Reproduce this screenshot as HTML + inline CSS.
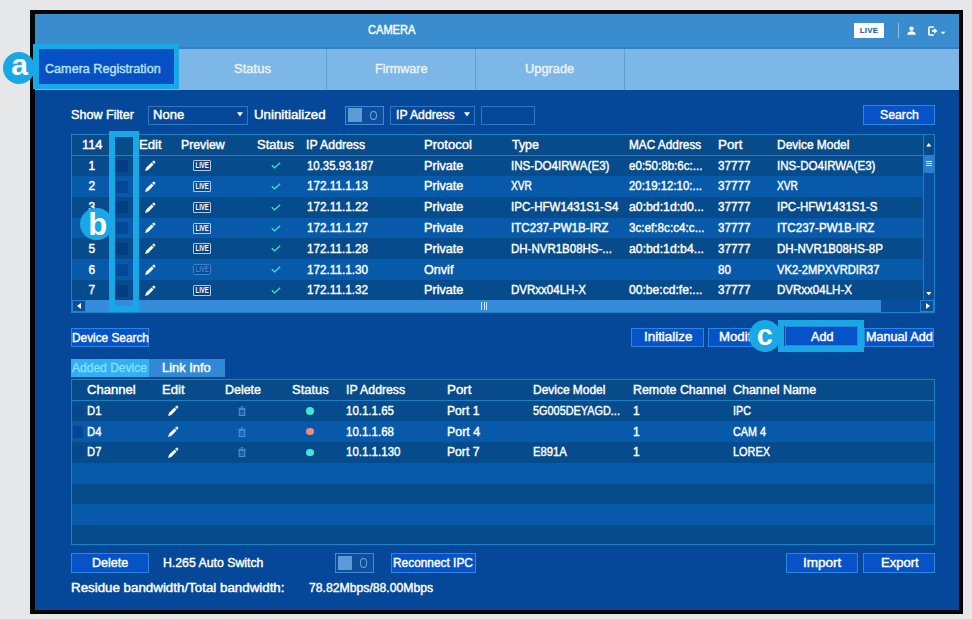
<!DOCTYPE html>
<html>
<head>
<meta charset="utf-8">
<title>CAMERA</title>
<style>
html,body{margin:0;padding:0;}
body{width:972px;height:619px;background:#e6e7e8;position:relative;overflow:hidden;
 font-family:"Liberation Sans",sans-serif;font-size:12px;color:#fff;-webkit-text-stroke:0.4px currentColor;}
div,span,svg{position:absolute;box-sizing:border-box;}
.t{white-space:nowrap;line-height:16px;height:16px;font-size:12px;transform-origin:0 50%;}
.btn{border:1px solid #2b86de;background:#0653c9;}
.hl{border:6px solid #1aa7e5;}
.circ{width:31px;height:31px;border-radius:16px;background:#1aa7e5;color:#fff;text-align:center;font-weight:bold;font-size:28px;line-height:28px;-webkit-text-stroke:0;}
</style>
</head>
<body>
<div style="left:30px;top:10px;width:933px;height:604px;background:#050505;"></div>
<div style="left:35px;top:14px;width:924px;height:596px;background:#05489a;"></div>
<div style="left:35px;top:14px;width:924px;height:34px;background:#398dcf;"></div>
<div style="left:35px;top:46.5px;width:924px;height:2.5px;background:#3181c5;"></div>
<div style="left:35px;top:49px;width:924px;height:41px;background:#7cb7e7;"></div>
<span class="t" style="left:367.5px;top:22px;transform:scaleX(0.923);">CAMERA</span>
<div style="left:854px;top:23px;width:30px;height:15px;background:#fff;color:#1a4fa8;font-size:8px;line-height:15px;text-align:center;font-weight:bold;letter-spacing:0.2px;-webkit-text-stroke:0;">LIVE</div>
<div style="left:898px;top:23px;width:1.2px;height:15px;background:rgba(255,255,255,0.45);"></div>
<svg style="left:907px;top:26px" width="9" height="9" viewBox="0 0 11 11"><circle cx="5.5" cy="3.2" r="2.7" fill="#fff"/><path d="M0.3 10.8 C0.3 7.5 3 6.4 5.5 6.4 C8 6.4 10.7 7.5 10.7 10.8 Z" fill="#fff"/></svg>
<svg style="left:927.5px;top:26px" width="18" height="9.9" viewBox="0 0 20 11"><path d="M6.5 1 H2.2 Q1 1 1 2.2 V8.8 Q1 10 2.2 10 H6.5" fill="none" stroke="#fff" stroke-width="1.7"/><path d="M4.5 4.3 H7 V2.3 L10.5 5.5 L7 8.7 V6.7 H4.5 Z" fill="#fff"/><path d="M14 6.4 H19.4 L16.7 9.1 Z" fill="#fff"/></svg>
<div style="left:325.5px;top:49px;width:1px;height:41px;background:#5f9fd8;"></div>
<div style="left:474.5px;top:49px;width:1px;height:41px;background:#5f9fd8;"></div>
<div style="left:623.5px;top:49px;width:1px;height:41px;background:#5f9fd8;"></div>
<div style="left:37px;top:48px;width:140px;height:38px;background:#0650c3;"></div>
<span class="t" style="left:45.2px;top:61px;transform:scaleX(1.051);color:#b5e0ff;">Camera Registration</span>
<span class="t" style="left:234px;top:61px;transform:scaleX(1.085);color:#e9f3fc;">Status</span>
<span class="t" style="left:375px;top:61px;transform:scaleX(1.048);color:#e9f3fc;">Firmware</span>
<span class="t" style="left:525px;top:61px;transform:scaleX(1.068);color:#e9f3fc;">Upgrade</span>
<span class="t" style="left:71px;top:107px;transform:scaleX(1.048);">Show Filter</span>
<div style="left:148px;top:105.5px;width:100px;height:19.5px;background:#07479a;border:1px solid #2c78c2;"></div>
<span class="t" style="left:153px;top:107px;transform:scaleX(1.086);">None</span>
<svg style="left:236.5px;top:112px" width="6" height="5" viewBox="0 0 6 5"><path d="M0 0.3 H6 L3 4.6 Z" fill="#fff"/></svg>
<span class="t" style="left:253.75px;top:107px;transform:scaleX(1.107);">Uninitialized</span>
<div style="left:345px;top:105.5px;width:38.5px;height:19.5px;background:#0d4f9c;border:1px solid #4388d0;"></div>
<div style="left:348px;top:108.25px;width:13.5px;height:14px;background:#5c9bd8;"></div>
<div style="left:369.5px;top:110.5px;width:7.5px;height:9.5px;border-radius:50%;border:1.3px solid #6aa6e0;"></div>
<div style="left:390px;top:105.5px;width:85px;height:19.5px;background:#07479a;border:1px solid #2c78c2;"></div>
<span class="t" style="left:395.5px;top:107px;transform:scaleX(1.015);">IP Address</span>
<svg style="left:463.7px;top:112px" width="6" height="5" viewBox="0 0 6 5"><path d="M0 0.3 H6 L3 4.6 Z" fill="#fff"/></svg>
<div style="left:480.75px;top:105.5px;width:54.5px;height:19.5px;background:#07479a;border:1px solid #2c78c2;"></div>
<div class="btn" style="left:863px;top:105px;width:72px;height:19.5px;"></div>
<span class="t" style="left:879.75px;top:107px;transform:scaleX(1.023);">Search</span>
<div style="left:70.5px;top:134px;width:864px;height:178.5px;background:#064b8c;border:1px solid #1a82c2;"></div>
<div style="left:71.5px;top:135px;width:862px;height:20px;background:#084b8a;"></div>
<div style="left:71.5px;top:155px;width:851.25px;height:1px;background:#1a82c2;"></div>
<span class="t" style="left:82px;top:137px;transform:scaleX(1.067);">114</span>
<span class="t" style="left:139px;top:137px;transform:scaleX(1.096);">Edit</span>
<span class="t" style="left:180.75px;top:137px;transform:scaleX(1.023);">Preview</span>
<span class="t" style="left:257px;top:137px;transform:scaleX(1.078);">Status</span>
<span class="t" style="left:306.25px;top:137px;transform:scaleX(1.023);">IP Address</span>
<span class="t" style="left:423.75px;top:137px;transform:scaleX(1.088);">Protocol</span>
<span class="t" style="left:511.5px;top:137px;transform:scaleX(1.034);">Type</span>
<span class="t" style="left:628.5px;top:137px;transform:scaleX(0.984);">MAC Address</span>
<span class="t" style="left:717.5px;top:137px;transform:scaleX(1.109);">Port</span>
<span class="t" style="left:776.5px;top:137px;transform:scaleX(0.996);">Device Model</span>
<div style="left:71.5px;top:156px;width:851.25px;height:20px;background:#064b8c;"></div>
<span class="t" style="left:88.5px;top:158px;">1</span>
<div style="left:115.5px;top:159.7px;width:12px;height:12px;background:rgba(0,30,110,0.3);"></div>
<svg style="left:143px;top:159px" width="14" height="14" viewBox="-7 -7 14 14"><g transform="rotate(-45)" fill="#fff"><path d="M-6.95 0 L-4 -1.5 H3.6 V1.5 H-4 Z"/><path d="M4.3 -1.5 H5.6 Q6.95 -1.5 6.95 0 Q6.95 1.5 5.6 1.5 H4.3 Z" opacity="0.85"/></g></svg>
<div style="left:192.7px;top:160.1px;width:18.7px;height:11.2px;border:1.2px solid rgba(205,228,250,0.85);border-radius:1.5px;background:rgba(0,40,110,0.25);"><span style="left:-10px;top:0;width:36.3px;height:8.8px;color:#fff;font-size:9px;line-height:9.6px;text-align:center;font-weight:bold;transform:scaleX(0.67);-webkit-text-stroke:0;">LIVE</span></div>
<svg style="left:271px;top:162.2px" width="10" height="7" viewBox="0 0 10 7"><path d="M0.8 3.3 L3.6 5.9 L9.2 0.8" fill="none" stroke="#3fe0d4" stroke-width="1.4"/></svg>
<span class="t" style="left:306.75px;top:158px;transform:scaleX(0.948);">10.35.93.187</span>
<span class="t" style="left:423.5px;top:158px;transform:scaleX(1.055);">Private</span>
<span class="t" style="left:511px;top:158px;transform:scaleX(0.965);">INS-DO4IRWA(E3)</span>
<span class="t" style="left:628.5px;top:158px;transform:scaleX(0.966);">e0:50:8b:6c:...</span>
<span class="t" style="left:717.5px;top:158px;transform:scaleX(0.971);">37777</span>
<span class="t" style="left:776.5px;top:158px;transform:scaleX(0.965);">INS-DO4IRWA(E3)</span>
<div style="left:71.5px;top:176px;width:851.25px;height:21px;background:#075aa9;"></div>
<span class="t" style="left:88.5px;top:178px;">2</span>
<div style="left:115.5px;top:180.5px;width:12px;height:12px;background:rgba(0,30,110,0.3);"></div>
<svg style="left:143px;top:179.8px" width="14" height="14" viewBox="-7 -7 14 14"><g transform="rotate(-45)" fill="#fff"><path d="M-6.95 0 L-4 -1.5 H3.6 V1.5 H-4 Z"/><path d="M4.3 -1.5 H5.6 Q6.95 -1.5 6.95 0 Q6.95 1.5 5.6 1.5 H4.3 Z" opacity="0.85"/></g></svg>
<div style="left:192.7px;top:180.9px;width:18.7px;height:11.2px;border:1.2px solid rgba(205,228,250,0.85);border-radius:1.5px;background:rgba(0,40,110,0.25);"><span style="left:-10px;top:0;width:36.3px;height:8.8px;color:#fff;font-size:9px;line-height:9.6px;text-align:center;font-weight:bold;transform:scaleX(0.67);-webkit-text-stroke:0;">LIVE</span></div>
<svg style="left:271px;top:183px" width="10" height="7" viewBox="0 0 10 7"><path d="M0.8 3.3 L3.6 5.9 L9.2 0.8" fill="none" stroke="#3fe0d4" stroke-width="1.4"/></svg>
<span class="t" style="left:306.75px;top:178px;transform:scaleX(0.975);">172.11.1.13</span>
<span class="t" style="left:423.5px;top:178px;transform:scaleX(1.055);">Private</span>
<span class="t" style="left:511px;top:178px;transform:scaleX(0.847);">XVR</span>
<span class="t" style="left:628.5px;top:178px;transform:scaleX(0.951);">20:19:12:10:...</span>
<span class="t" style="left:717.5px;top:178px;transform:scaleX(0.971);">37777</span>
<span class="t" style="left:776.5px;top:178px;transform:scaleX(0.847);">XVR</span>
<div style="left:71.5px;top:197px;width:851.25px;height:21px;background:#064b8c;"></div>
<span class="t" style="left:88.5px;top:199px;">3</span>
<div style="left:115.5px;top:201.3px;width:12px;height:12px;background:rgba(0,30,110,0.3);"></div>
<svg style="left:143px;top:200.6px" width="14" height="14" viewBox="-7 -7 14 14"><g transform="rotate(-45)" fill="#fff"><path d="M-6.95 0 L-4 -1.5 H3.6 V1.5 H-4 Z"/><path d="M4.3 -1.5 H5.6 Q6.95 -1.5 6.95 0 Q6.95 1.5 5.6 1.5 H4.3 Z" opacity="0.85"/></g></svg>
<div style="left:192.7px;top:201.7px;width:18.7px;height:11.2px;border:1.2px solid rgba(205,228,250,0.85);border-radius:1.5px;background:rgba(0,40,110,0.25);"><span style="left:-10px;top:0;width:36.3px;height:8.8px;color:#fff;font-size:9px;line-height:9.6px;text-align:center;font-weight:bold;transform:scaleX(0.67);-webkit-text-stroke:0;">LIVE</span></div>
<svg style="left:271px;top:203.8px" width="10" height="7" viewBox="0 0 10 7"><path d="M0.8 3.3 L3.6 5.9 L9.2 0.8" fill="none" stroke="#3fe0d4" stroke-width="1.4"/></svg>
<span class="t" style="left:306.75px;top:199px;transform:scaleX(0.975);">172.11.1.22</span>
<span class="t" style="left:423.5px;top:199px;transform:scaleX(1.055);">Private</span>
<span class="t" style="left:511px;top:199px;transform:scaleX(0.964);">IPC-HFW1431S1-S4</span>
<span class="t" style="left:628.5px;top:199px;transform:scaleX(1.021);">a0:bd:1d:d0...</span>
<span class="t" style="left:717.5px;top:199px;transform:scaleX(0.971);">37777</span>
<span class="t" style="left:776.5px;top:199px;transform:scaleX(0.959);">IPC-HFW1431S1-S</span>
<div style="left:71.5px;top:218px;width:851.25px;height:20px;background:#075aa9;"></div>
<span class="t" style="left:88.5px;top:220px;">4</span>
<div style="left:115.5px;top:222.1px;width:12px;height:12px;background:rgba(0,30,110,0.3);"></div>
<svg style="left:143px;top:221.4px" width="14" height="14" viewBox="-7 -7 14 14"><g transform="rotate(-45)" fill="#fff"><path d="M-6.95 0 L-4 -1.5 H3.6 V1.5 H-4 Z"/><path d="M4.3 -1.5 H5.6 Q6.95 -1.5 6.95 0 Q6.95 1.5 5.6 1.5 H4.3 Z" opacity="0.85"/></g></svg>
<div style="left:192.7px;top:222.5px;width:18.7px;height:11.2px;border:1.2px solid rgba(205,228,250,0.85);border-radius:1.5px;background:rgba(0,40,110,0.25);"><span style="left:-10px;top:0;width:36.3px;height:8.8px;color:#fff;font-size:9px;line-height:9.6px;text-align:center;font-weight:bold;transform:scaleX(0.67);-webkit-text-stroke:0;">LIVE</span></div>
<svg style="left:271px;top:224.6px" width="10" height="7" viewBox="0 0 10 7"><path d="M0.8 3.3 L3.6 5.9 L9.2 0.8" fill="none" stroke="#3fe0d4" stroke-width="1.4"/></svg>
<span class="t" style="left:306.75px;top:220px;transform:scaleX(0.975);">172.11.1.27</span>
<span class="t" style="left:423.5px;top:220px;transform:scaleX(1.055);">Private</span>
<span class="t" style="left:511px;top:220px;transform:scaleX(0.967);">ITC237-PW1B-IRZ</span>
<span class="t" style="left:628.5px;top:220px;transform:scaleX(0.975);">3c:ef:8c:c4:c...</span>
<span class="t" style="left:717.5px;top:220px;transform:scaleX(0.971);">37777</span>
<span class="t" style="left:776.5px;top:220px;transform:scaleX(0.967);">ITC237-PW1B-IRZ</span>
<div style="left:71.5px;top:238px;width:851.25px;height:21px;background:#064b8c;"></div>
<span class="t" style="left:88.5px;top:241px;">5</span>
<div style="left:115.5px;top:242.9px;width:12px;height:12px;background:rgba(0,30,110,0.3);"></div>
<svg style="left:143px;top:242.2px" width="14" height="14" viewBox="-7 -7 14 14"><g transform="rotate(-45)" fill="#fff"><path d="M-6.95 0 L-4 -1.5 H3.6 V1.5 H-4 Z"/><path d="M4.3 -1.5 H5.6 Q6.95 -1.5 6.95 0 Q6.95 1.5 5.6 1.5 H4.3 Z" opacity="0.85"/></g></svg>
<div style="left:192.7px;top:243.3px;width:18.7px;height:11.2px;border:1.2px solid rgba(205,228,250,0.85);border-radius:1.5px;background:rgba(0,40,110,0.25);"><span style="left:-10px;top:0;width:36.3px;height:8.8px;color:#fff;font-size:9px;line-height:9.6px;text-align:center;font-weight:bold;transform:scaleX(0.67);-webkit-text-stroke:0;">LIVE</span></div>
<svg style="left:271px;top:245.4px" width="10" height="7" viewBox="0 0 10 7"><path d="M0.8 3.3 L3.6 5.9 L9.2 0.8" fill="none" stroke="#3fe0d4" stroke-width="1.4"/></svg>
<span class="t" style="left:306.75px;top:241px;transform:scaleX(0.975);">172.11.1.28</span>
<span class="t" style="left:423.5px;top:241px;transform:scaleX(1.055);">Private</span>
<span class="t" style="left:511px;top:241px;transform:scaleX(0.958);">DH-NVR1B08HS-...</span>
<span class="t" style="left:628.5px;top:241px;transform:scaleX(1.021);">a0:bd:1d:b4...</span>
<span class="t" style="left:717.5px;top:241px;transform:scaleX(0.971);">37777</span>
<span class="t" style="left:776.5px;top:241px;transform:scaleX(0.962);">DH-NVR1B08HS-8P</span>
<div style="left:71.5px;top:259px;width:851.25px;height:21px;background:#075aa9;"></div>
<span class="t" style="left:88.5px;top:262px;">6</span>
<div style="left:115.5px;top:263.7px;width:12px;height:12px;background:rgba(0,30,110,0.3);"></div>
<svg style="left:143px;top:263px" width="14" height="14" viewBox="-7 -7 14 14"><g transform="rotate(-45)" fill="#fff"><path d="M-6.95 0 L-4 -1.5 H3.6 V1.5 H-4 Z"/><path d="M4.3 -1.5 H5.6 Q6.95 -1.5 6.95 0 Q6.95 1.5 5.6 1.5 H4.3 Z" opacity="0.85"/></g></svg>
<div style="left:192.7px;top:264.1px;width:18.7px;height:11.2px;border:1.2px solid #3f86cf;border-radius:1.5px;background:rgba(0,40,110,0.25);"><span style="left:-10px;top:0;width:36.3px;height:8.8px;color:#3f86cf;font-size:9px;line-height:9.6px;text-align:center;font-weight:bold;transform:scaleX(0.67);-webkit-text-stroke:0;">LIVE</span></div>
<svg style="left:271px;top:266.2px" width="10" height="7" viewBox="0 0 10 7"><path d="M0.8 3.3 L3.6 5.9 L9.2 0.8" fill="none" stroke="#3fe0d4" stroke-width="1.4"/></svg>
<span class="t" style="left:306.75px;top:262px;transform:scaleX(0.975);">172.11.1.30</span>
<span class="t" style="left:423.5px;top:262px;transform:scaleX(1.050);">Onvif</span>
<span class="t" style="left:717.5px;top:262px;transform:scaleX(0.967);">80</span>
<span class="t" style="left:776.5px;top:262px;transform:scaleX(0.931);">VK2-2MPXVRDIR37</span>
<div style="left:71.5px;top:280px;width:851.25px;height:20px;background:#064b8c;"></div>
<span class="t" style="left:88.5px;top:282px;">7</span>
<div style="left:115.5px;top:284.5px;width:12px;height:12px;background:rgba(0,30,110,0.3);"></div>
<svg style="left:143px;top:283.8px" width="14" height="14" viewBox="-7 -7 14 14"><g transform="rotate(-45)" fill="#fff"><path d="M-6.95 0 L-4 -1.5 H3.6 V1.5 H-4 Z"/><path d="M4.3 -1.5 H5.6 Q6.95 -1.5 6.95 0 Q6.95 1.5 5.6 1.5 H4.3 Z" opacity="0.85"/></g></svg>
<div style="left:192.7px;top:284.9px;width:18.7px;height:11.2px;border:1.2px solid rgba(205,228,250,0.85);border-radius:1.5px;background:rgba(0,40,110,0.25);"><span style="left:-10px;top:0;width:36.3px;height:8.8px;color:#fff;font-size:9px;line-height:9.6px;text-align:center;font-weight:bold;transform:scaleX(0.67);-webkit-text-stroke:0;">LIVE</span></div>
<svg style="left:271px;top:287px" width="10" height="7" viewBox="0 0 10 7"><path d="M0.8 3.3 L3.6 5.9 L9.2 0.8" fill="none" stroke="#3fe0d4" stroke-width="1.4"/></svg>
<span class="t" style="left:306.75px;top:282px;transform:scaleX(0.975);">172.11.1.32</span>
<span class="t" style="left:423.5px;top:282px;transform:scaleX(1.055);">Private</span>
<span class="t" style="left:511px;top:282px;transform:scaleX(0.960);">DVRxx04LH-X</span>
<span class="t" style="left:628.5px;top:282px;transform:scaleX(1.010);">00:be:cd:fe:...</span>
<span class="t" style="left:717.5px;top:282px;transform:scaleX(0.971);">37777</span>
<span class="t" style="left:776.5px;top:282px;transform:scaleX(0.960);">DVRxx04LH-X</span>
<div style="left:922.75px;top:135px;width:1px;height:165px;background:#1a82c2;"></div>
<div style="left:923.75px;top:155px;width:9.75px;height:145px;background:#074e9f;"></div>
<div style="left:923.75px;top:155px;width:9.75px;height:18px;background:#2b7fd0;"></div>
<div style="left:923.75px;top:287px;width:9.75px;height:13px;background:#0a4f9e;"></div>
<svg style="left:926px;top:143px" width="5.5" height="3.5" viewBox="0 0 6 4"><path d="M0 4 L3 0 L6 4 Z" fill="#fff"/></svg>
<svg style="left:926px;top:291.5px" width="5.5" height="3.5" viewBox="0 0 6 4"><path d="M0 0 L3 4 L6 0 Z" fill="#fff"/></svg>
<div style="left:925.5px;top:161px;width:6px;height:1px;background:#cfe6ff;"></div>
<div style="left:925.5px;top:163.2px;width:6px;height:1px;background:#cfe6ff;"></div>
<div style="left:925.5px;top:165.4px;width:6px;height:1px;background:#cfe6ff;"></div>
<div style="left:72px;top:300px;width:861.5px;height:11.5px;background:#358cda;"></div>
<div style="left:72px;top:300px;width:14px;height:11.5px;background:#0a4f9e;border:1px solid #2b7fd0;"></div>
<div style="left:920px;top:300px;width:13.5px;height:11.5px;background:#0a4f9e;border:1px solid #2b7fd0;"></div>
<div style="left:881px;top:300px;width:39px;height:11.5px;background:#074e9f;"></div>
<svg style="left:77px;top:303px" width="4" height="6" viewBox="0 0 4 6"><path d="M4 0 L0 3 L4 6 Z" fill="#fff"/></svg>
<svg style="left:925.5px;top:303px" width="4" height="6" viewBox="0 0 4 6"><path d="M0 0 L4 3 L0 6 Z" fill="#fff"/></svg>
<div style="left:481px;top:302px;width:1px;height:8px;background:#cfe6ff;"></div>
<div style="left:483.5px;top:302px;width:1px;height:8px;background:#cfe6ff;"></div>
<div style="left:486px;top:302px;width:1px;height:8px;background:#cfe6ff;"></div>
<div class="btn" style="left:70.75px;top:328px;width:78px;height:19px;"></div>
<span class="t" style="left:71.5px;top:330px;transform:scaleX(0.986);">Device Search</span>
<div class="btn" style="left:631.25px;top:327.5px;width:72.5px;height:19.5px;"></div>
<span class="t" style="left:643.5px;top:329px;transform:scaleX(1.116);">Initialize</span>
<div class="btn" style="left:708px;top:327.5px;width:68px;height:19.5px;"></div>
<span class="t" style="left:718.75px;top:329px;transform:scaleX(1.101);">Modify</span>
<div class="btn" style="left:785px;top:326.25px;width:73px;height:19.75px;"></div>
<span class="t" style="left:810.5px;top:329px;transform:scaleX(1.049);">Add</span>
<div class="btn" style="left:864.4px;top:328px;width:69.9px;height:18.75px;"></div>
<span class="t" style="left:866.2px;top:329px;transform:scaleX(1.052);">Manual Add</span>
<div style="left:70.75px;top:377px;width:863.75px;height:2px;background:#084b8a;"></div>
<div style="left:70.75px;top:358.5px;width:78px;height:18.5px;background:#32b0f3;"></div>
<span class="t" style="left:71.5px;top:360px;transform:scaleX(1.003);color:#8ae2ff;-webkit-text-stroke:0.3px #8ae2ff;">Added Device</span>
<div style="left:148.75px;top:358.5px;width:76.25px;height:18.5px;background:#3189d5;"></div>
<span class="t" style="left:161.75px;top:360px;transform:scaleX(1.073);">Link Info</span>
<div style="left:70.75px;top:378.5px;width:863.75px;height:166.5px;background:#064b8c;border:1px solid #1a82c2;"></div>
<div style="left:71.75px;top:379.5px;width:861.75px;height:20px;background:#084b8a;"></div>
<div style="left:71.75px;top:399.5px;width:861.75px;height:1px;background:#1a82c2;"></div>
<span class="t" style="left:86.75px;top:382px;transform:scaleX(1.088);">Channel</span>
<span class="t" style="left:162.25px;top:382px;transform:scaleX(1.096);">Edit</span>
<span class="t" style="left:224.5px;top:382px;transform:scaleX(1.035);">Delete</span>
<span class="t" style="left:292px;top:382px;transform:scaleX(1.078);">Status</span>
<span class="t" style="left:346.25px;top:382px;transform:scaleX(1.023);">IP Address</span>
<span class="t" style="left:446.75px;top:382px;transform:scaleX(1.109);">Port</span>
<span class="t" style="left:532.75px;top:382px;transform:scaleX(0.996);">Device Model</span>
<span class="t" style="left:633px;top:382px;transform:scaleX(1.034);">Remote Channel</span>
<span class="t" style="left:733px;top:382px;transform:scaleX(1.039);">Channel Name</span>
<div style="left:71.75px;top:400.5px;width:861.75px;height:20.5px;background:#064b8c;"></div>
<div style="left:71.75px;top:421px;width:861.75px;height:21px;background:#075aa9;"></div>
<div style="left:71.75px;top:442px;width:861.75px;height:21px;background:#064b8c;"></div>
<div style="left:71.75px;top:463px;width:861.75px;height:21px;background:#075aa9;"></div>
<div style="left:71.75px;top:484px;width:861.75px;height:20px;background:#064b8c;"></div>
<div style="left:71.75px;top:504px;width:861.75px;height:21px;background:#075aa9;"></div>
<div style="left:71.75px;top:525px;width:861.75px;height:19px;background:#064b8c;"></div>
<div style="left:72.5px;top:404.8px;width:10px;height:12px;background:rgba(0,30,110,0.08);"></div>
<span class="t" style="left:87px;top:403px;transform:scaleX(0.938);">D1</span>
<svg style="left:166.25px;top:404.1px" width="14" height="14" viewBox="-7 -7 14 14"><g transform="rotate(-45)" fill="#fff"><path d="M-6.95 0 L-4 -1.5 H3.6 V1.5 H-4 Z"/><path d="M4.3 -1.5 H5.6 Q6.95 -1.5 6.95 0 Q6.95 1.5 5.6 1.5 H4.3 Z" opacity="0.85"/></g></svg>
<svg style="left:237.5px;top:405.8px" width="8" height="10" viewBox="0 0 8 10"><path d="M0.3 2.2 H7.7 M2.8 0.8 H5.2" stroke="#4a8fd6" stroke-width="1.1" fill="none"/><path d="M1.3 3.4 H6.7 V9.4 H1.3 Z" fill="none" stroke="#4a8fd6" stroke-width="1.1"/><path d="M3 4.5 V8.3 M5 4.5 V8.3" stroke="#4a8fd6" stroke-width="0.7"/></svg>
<div style="left:306.4px;top:406.9px;width:7.8px;height:7.8px;border-radius:3.9px;background:#40e8d2;"></div>
<span class="t" style="left:346.25px;top:403px;transform:scaleX(0.958);">10.1.1.65</span>
<span class="t" style="left:446.75px;top:403px;transform:scaleX(1.012);">Port 1</span>
<span class="t" style="left:532.75px;top:403px;transform:scaleX(0.907);">5G005DEYAGD...</span>
<span class="t" style="left:633px;top:403px;">1</span>
<span class="t" style="left:733px;top:403px;transform:scaleX(0.895);">IPC</span>
<div style="left:72.5px;top:425.6px;width:10px;height:12px;background:rgba(0,30,110,0.3);"></div>
<span class="t" style="left:87px;top:424px;transform:scaleX(0.938);">D4</span>
<svg style="left:166.25px;top:424.9px" width="14" height="14" viewBox="-7 -7 14 14"><g transform="rotate(-45)" fill="#fff"><path d="M-6.95 0 L-4 -1.5 H3.6 V1.5 H-4 Z"/><path d="M4.3 -1.5 H5.6 Q6.95 -1.5 6.95 0 Q6.95 1.5 5.6 1.5 H4.3 Z" opacity="0.85"/></g></svg>
<svg style="left:237.5px;top:426.6px" width="8" height="10" viewBox="0 0 8 10"><path d="M0.3 2.2 H7.7 M2.8 0.8 H5.2" stroke="#4a8fd6" stroke-width="1.1" fill="none"/><path d="M1.3 3.4 H6.7 V9.4 H1.3 Z" fill="none" stroke="#4a8fd6" stroke-width="1.1"/><path d="M3 4.5 V8.3 M5 4.5 V8.3" stroke="#4a8fd6" stroke-width="0.7"/></svg>
<div style="left:306.4px;top:427.7px;width:7.8px;height:7.8px;border-radius:3.9px;background:#f08a84;"></div>
<span class="t" style="left:346.25px;top:424px;transform:scaleX(0.958);">10.1.1.68</span>
<span class="t" style="left:446.75px;top:424px;transform:scaleX(1.036);">Port 4</span>
<span class="t" style="left:633px;top:424px;">1</span>
<span class="t" style="left:733px;top:424px;transform:scaleX(0.897);">CAM 4</span>
<div style="left:72.5px;top:446.4px;width:10px;height:12px;background:rgba(0,30,110,0.08);"></div>
<span class="t" style="left:87px;top:444px;transform:scaleX(0.938);">D7</span>
<svg style="left:166.25px;top:445.7px" width="14" height="14" viewBox="-7 -7 14 14"><g transform="rotate(-45)" fill="#fff"><path d="M-6.95 0 L-4 -1.5 H3.6 V1.5 H-4 Z"/><path d="M4.3 -1.5 H5.6 Q6.95 -1.5 6.95 0 Q6.95 1.5 5.6 1.5 H4.3 Z" opacity="0.85"/></g></svg>
<svg style="left:237.5px;top:447.4px" width="8" height="10" viewBox="0 0 8 10"><path d="M0.3 2.2 H7.7 M2.8 0.8 H5.2" stroke="#4a8fd6" stroke-width="1.1" fill="none"/><path d="M1.3 3.4 H6.7 V9.4 H1.3 Z" fill="none" stroke="#4a8fd6" stroke-width="1.1"/><path d="M3 4.5 V8.3 M5 4.5 V8.3" stroke="#4a8fd6" stroke-width="0.7"/></svg>
<div style="left:306.4px;top:448.5px;width:7.8px;height:7.8px;border-radius:3.9px;background:#40e8d2;"></div>
<span class="t" style="left:346.25px;top:444px;transform:scaleX(0.960);">10.1.1.130</span>
<span class="t" style="left:446.75px;top:444px;transform:scaleX(1.012);">Port 7</span>
<span class="t" style="left:532.75px;top:444px;transform:scaleX(0.941);">E891A</span>
<span class="t" style="left:633px;top:444px;">1</span>
<span class="t" style="left:733px;top:444px;transform:scaleX(0.907);">LOREX</span>
<div class="btn" style="left:70.75px;top:553px;width:78px;height:19.5px;"></div>
<span class="t" style="left:91.88px;top:555px;transform:scaleX(1.042);">Delete</span>
<span class="t" style="left:162.5px;top:555px;transform:scaleX(1.024);">H.265 Auto Switch</span>
<div style="left:335px;top:553px;width:38.75px;height:19.5px;background:#0d4f9c;border:1px solid #4388d0;"></div>
<div style="left:338px;top:555.75px;width:13.5px;height:14px;background:#5c9bd8;"></div>
<div style="left:359.5px;top:558px;width:7.5px;height:9.5px;border-radius:50%;border:1.3px solid #6aa6e0;"></div>
<div class="btn" style="left:390.5px;top:553px;width:85.25px;height:19.5px;"></div>
<span class="t" style="left:393.38px;top:555px;transform:scaleX(0.990);">Reconnect IPC</span>
<div class="btn" style="left:786.4px;top:553px;width:71.6px;height:19.5px;"></div>
<span class="t" style="left:803.3px;top:555px;transform:scaleX(1.124);">Import</span>
<div class="btn" style="left:863.2px;top:553px;width:72px;height:19.5px;"></div>
<span class="t" style="left:880.55px;top:555px;transform:scaleX(1.087);">Export</span>
<span class="t" style="left:71.25px;top:580px;transform:scaleX(1.111);">Residue bandwidth/Total bandwidth:</span>
<span class="t" style="left:308.75px;top:580px;transform:scaleX(1.017);">78.82Mbps/88.00Mbps</span>
<div class="hl" style="left:33px;top:44px;width:146.4px;height:45.3px;border-width:5.3px 5px 5.5px 6px;"></div>
<div class="circ" style="left:3px;top:51.8px;width:32px;height:32px;border-radius:16px;"></div>
<span style="left:-0.5px;top:45.3px;width:40px;height:40px;line-height:40px;text-align:center;font-weight:bold;font-size:30px;color:#fff;-webkit-text-stroke:0;">a</span>
<div class="hl" style="left:109px;top:131px;width:30px;height:181px;"></div>
<div class="circ" style="left:80px;top:207.5px;width:32.5px;height:32.5px;border-radius:16.25px;"></div>
<span style="left:77.75px;top:204.75px;width:40px;height:40px;line-height:40px;text-align:center;font-weight:bold;font-size:31px;color:#fff;-webkit-text-stroke:0;">b</span>
<div class="hl" style="left:778px;top:319.5px;width:86px;height:32.5px;border-width:6.75px;"></div>
<div class="circ" style="left:748.5px;top:320px;width:32px;height:32px;border-radius:16px;"></div>
<span style="left:744.9px;top:315px;width:40px;height:40px;line-height:40px;text-align:center;font-weight:bold;font-size:29px;color:#fff;-webkit-text-stroke:0;">c</span>
</body>
</html>
